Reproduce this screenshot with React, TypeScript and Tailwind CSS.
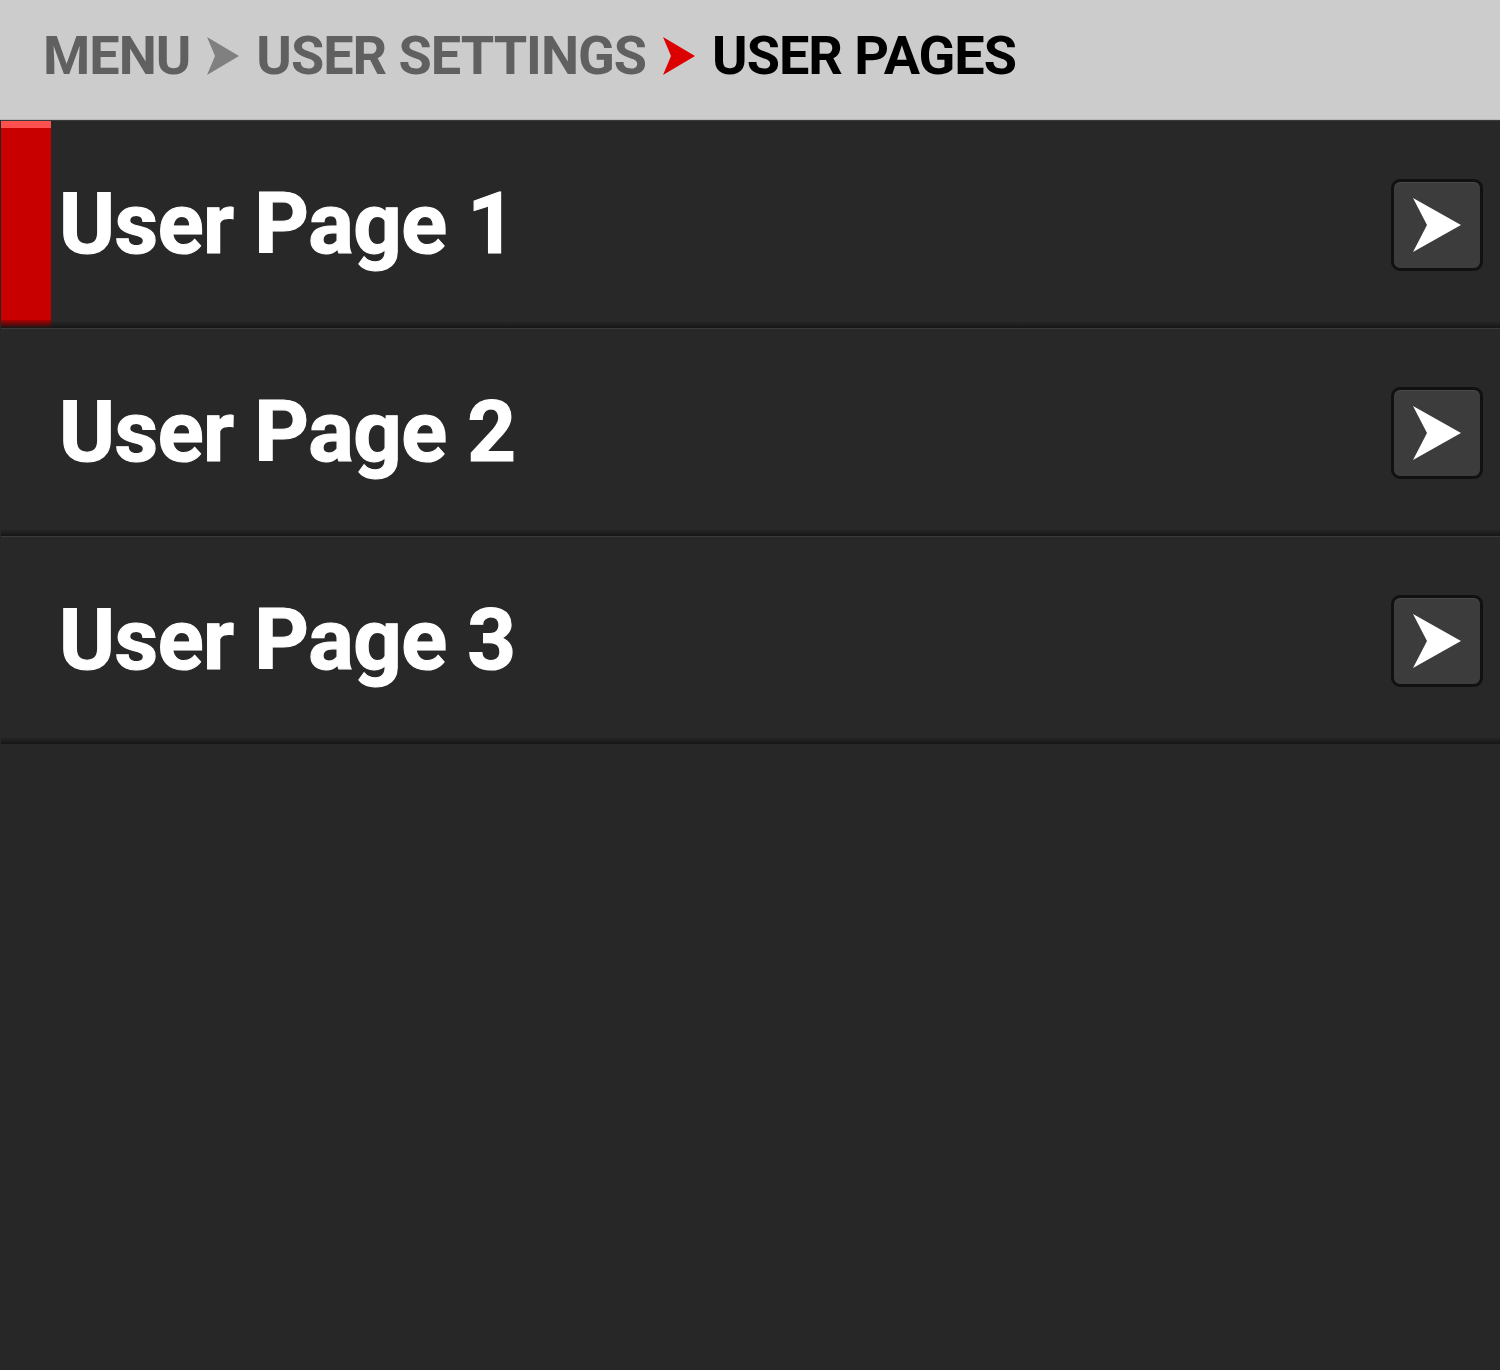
import { ReactNode } from 'react';

const pages = ['User Page 1', 'User Page 2', 'User Page 3'];

const Chevron = ({ color }: { color: string }) => (
  <svg width="32" height="38" viewBox="0 0 32 38" className="mx-[17px]">
    <polygon points="0,0 32,19 0,38 8,19" fill={color} />
  </svg>
);

const ArrowButton = () => (
  <div className="w-[92px] h-[92px] rounded-[9px] border-[3px] border-[#111] bg-[#3c3c3c] shadow-[inset_0_1px_0_#4a4a4a] flex items-center justify-center">
    <svg width="52" height="58" viewBox="0 0 52 58">
      <polygon points="2,2 50,29 2,56 16,29" fill="#fff" />
    </svg>
  </div>
);

const Row = ({ label, active, children }: { label: string; active?: boolean; children?: ReactNode }) => (
  <div className="relative h-[208px] ml-px flex items-center bg-[#282828] border-t border-[#3a3a3a]">
    {active && (
      <div className="absolute left-0 top-0 bottom-0 w-[50px] bg-[#c80000] flex flex-col justify-between">
        <div className="h-[7px] bg-[#ff5050]" />
        <div className="h-[8px] bg-[#a00000]" />
      </div>
    )}
    <div className="absolute left-0 right-0 bottom-0 h-[7px] bg-gradient-to-b from-transparent to-[#161616]" />
    <span className="ml-[58px] text-white font-bold text-[85px] leading-none tracking-[-0.5px] [-webkit-text-stroke:1.2px_white]">
      {label}
    </span>
    <div className="ml-auto mr-[17px]">
      <ArrowButton />
    </div>
    {children}
  </div>
);

export default function App() {
  return (
    <div
      className="w-[1500px] h-[1370px] bg-[#272727] overflow-hidden"
      style={{ fontFamily: 'Roboto, "Liberation Sans", sans-serif' }}
    >
      {/* Breadcrumb */}
      <div className="h-[120px] bg-[#cccccc] border-b border-[#b8b8b8] flex items-center pl-[43px] pb-[8px] font-bold text-[54px] leading-none tracking-[-1px]">
        <span className="text-[#606060]">MENU</span>
        <Chevron color="#808080" />
        <span className="text-[#606060]">USER SETTINGS</span>
        <Chevron color="#dd0000" />
        <span className="text-black">USER PAGES</span>
      </div>

      {pages.map((p, i) => (
        <Row key={p} label={p} active={i === 0} />
      ))}
    </div>
  );
}
